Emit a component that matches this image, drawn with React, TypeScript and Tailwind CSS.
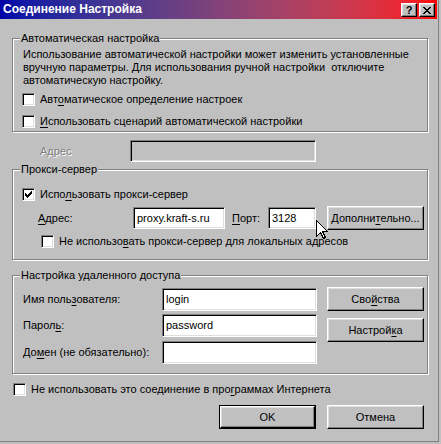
import React from 'react'

const sunken =
  'border border-t-[#808080] border-l-[#808080] border-r-white border-b-white shadow-[inset_1px_1px_0_#000,inset_-1px_-1px_0_#dfdfdf]'
const raised =
  'border border-t-white border-l-white border-r-black border-b-black shadow-[inset_-1px_-1px_0_#808080,inset_1px_1px_0_#dfdfdf]'

function CheckBox({ checked = false }: { checked?: boolean }) {
  return (
    <span className={`block w-[13px] h-[13px] shrink-0 bg-white ${sunken}`}>
      {checked && (
        <svg width="11" height="11" viewBox="0 0 11 11" shapeRendering="crispEdges" className="block">
          <rect x="2" y="4" width="1" height="3" fill="#000" />
          <rect x="3" y="5" width="1" height="3" fill="#000" />
          <rect x="4" y="6" width="1" height="3" fill="#000" />
          <rect x="5" y="5" width="1" height="3" fill="#000" />
          <rect x="6" y="4" width="1" height="3" fill="#000" />
          <rect x="7" y="3" width="1" height="3" fill="#000" />
          <rect x="8" y="2" width="1" height="3" fill="#000" />
        </svg>
      )}
    </span>
  )
}

function CheckRow({ checked, className = '', children }: { checked?: boolean; className?: string; children: React.ReactNode }) {
  return (
    <div className={`flex items-center gap-[5px] h-[13px] ${className}`}>
      <CheckBox checked={checked} />
      <span className="whitespace-nowrap">{children}</span>
    </div>
  )
}

function Group({ title, className = '', children }: { title: string; className?: string; children: React.ReactNode }) {
  return (
    <div className={`relative w-[416px] border border-[#808080] shadow-[inset_1px_1px_0_#fff,1px_1px_0_#fff] ${className}`}>
      <span className="absolute left-[7px] -top-[7px] px-[1px] bg-[#c0c0c0] leading-[13px] whitespace-nowrap">{title}</span>
      {children}
    </div>
  )
}

function Field({ value = '', width, height = 'h-[22px]', disabled = false }: { value?: string; width: string; height?: string; disabled?: boolean }) {
  return (
    <div className={`${width} ${height} shrink-0 flex items-center pl-[3px] ${disabled ? 'bg-[#c0c0c0]' : 'bg-white'} ${sunken}`}>
      <span className="whitespace-nowrap">{value}</span>
    </div>
  )
}

function Button({ children, className = '' }: { children: React.ReactNode; className?: string }) {
  return (
    <div className={`w-[97px] h-[24px] shrink-0 flex items-center justify-center bg-[#c0c0c0] ${raised} ${className}`}>
      <span className="whitespace-nowrap">{children}</span>
    </div>
  )
}

function Key({ children }: { children: React.ReactNode }) {
  return <u className="underline underline-offset-[2px]">{children}</u>
}

export default function App() {
  return (
    <div className="relative w-[441px] h-[444px] bg-[#c0c0c0] overflow-hidden text-[11px] leading-[13px] text-black font-['Liberation_Sans',Arial,sans-serif]">
      <div className="w-[439px] h-[442px] border-r border-b border-[#808080]">
        {/* title bar */}
        <div className="flex items-start w-[437px] h-[19px] bg-linear-to-r from-[#0000a8] to-[#ff0000]">
          <span className="ml-[3px] mt-[2px] text-[12px] leading-[15px] font-bold text-white whitespace-nowrap">Соединение Настройка</span>
          <div className="ml-auto mr-[2px] mt-[3px] flex gap-[2px]">
            <div className={`w-[16px] h-[14px] flex items-center justify-center bg-[#c0c0c0] ${raised}`}>
              <span className="text-[11px] leading-[11px] font-bold">?</span>
            </div>
            <div className={`w-[16px] h-[14px] flex items-center justify-center bg-[#c0c0c0] ${raised}`}>
              <svg width="8" height="7" viewBox="0 0 8 7" shapeRendering="crispEdges">
                <path d="M0 0h2v1h-2zM6 0h2v1h-2zM1 1h2v1h-2zM5 1h2v1h-2zM2 2h4v1h-4zM3 3h2v1h-2zM2 4h4v1h-4zM1 5h2v1h-2zM5 5h2v1h-2zM0 6h2v1h-2zM6 6h2v1h-2z" fill="#000" />
              </svg>
            </div>
          </div>
        </div>

        <div className="pl-[12px]">
          <Group title="Автоматическая настройка" className="mt-[19px] h-[94px]">
            <p className="pl-[10px] pt-[9px] whitespace-nowrap">
              Использование автоматической настройки может изменить установленные
              <br />
              вручную параметры. Для использования ручной настройки{'\u00a0'} отключите
              <br />
              автоматическую настройку.
            </p>
            <CheckRow className="mt-[6px] pl-[9px]">
              Авт<Key>о</Key>матическое определение настроек
            </CheckRow>
            <CheckRow className="mt-[9px] pl-[9px]">
              <Key>И</Key>спользовать сценарий автоматической настройки
            </CheckRow>
          </Group>

          <div className="mt-[8px] flex items-center h-[22px]">
            <span className="ml-[28px] w-[90px] text-[#808080] [text-shadow:1px_1px_0_#fff]">Адрес</span>
            <Field width="w-[186px]" disabled />
          </div>

          <Group title="Прокси-сервер" className="mt-[7px] h-[91px]">
            <CheckRow checked className="mt-[18px] pl-[9px]">
              Испо<Key>л</Key>ьзовать прокси-сервер
            </CheckRow>
            <div className="mt-[5px] flex items-center h-[24px] pl-[25px]">
              <span className="w-[95px] shrink-0"><Key>А</Key>дрес:</span>
              <Field width="w-[92px]" value="proxy.kraft-s.ru" />
              <span className="ml-[7px] w-[36px] shrink-0"><Key>П</Key>орт:</span>
              <Field width="w-[48px]" value="3128" />
              <Button className="ml-[11px]">
                Дополни<Key>т</Key>ельно...
              </Button>
            </div>
            <CheckRow className="mt-[5px] pl-[28px]">
              Не использо<Key>в</Key>ать прокси-сервер для локальных адресов
            </CheckRow>
          </Group>

          <Group title="Настройка удаленного доступа" className="mt-[15px] h-[99px]">
            <div className="flex">
              <div className="pl-[10px] pt-[12px] flex flex-col">
                <div className="flex items-center h-[23px]">
                  <span className="w-[139px] shrink-0">Имя поль<Key>з</Key>ователя:</span>
                  <Field width="w-[155px]" height="h-[23px]" value="login" />
                </div>
                <div className="mt-[3px] flex items-center h-[23px]">
                  <span className="w-[139px] shrink-0">Парол<Key>ь</Key>:</span>
                  <Field width="w-[155px]" height="h-[23px]" value="password" />
                </div>
                <div className="mt-[4px] flex items-center h-[23px]">
                  <span className="w-[139px] shrink-0">До<Key>м</Key>ен (не обязательно):</span>
                  <Field width="w-[155px]" height="h-[23px]" />
                </div>
              </div>
              <div className="ml-[10px] pt-[11px] flex flex-col gap-[7px]">
                <Button>
                  Сво<Key>й</Key>ства
                </Button>
                <Button>
                  Настрой<Key>к</Key>а
                </Button>
              </div>
            </div>
          </Group>

          <CheckRow className="mt-[9px] pl-[1px]">
            Не использовать это соединение в про<Key>г</Key>раммах Интернета
          </CheckRow>

          <div className="mt-[9px] flex pl-[207px] gap-[11px]">
            <div className="w-[97px] h-[24px] border border-black">
              <div className={`w-full h-full flex items-center justify-center bg-[#c0c0c0] ${raised}`}>OK</div>
            </div>
            <Button>Отмена</Button>
          </div>
        </div>
      </div>

      {/* mouse pointer */}
      <svg className="absolute left-[316px] top-[220px]" width="12" height="19" viewBox="0 0 12 19" shapeRendering="crispEdges">
        <path d="M0.5 0.5V16.5L4.5 12.5L7.5 18.5L9.5 17.5L6.5 11.5H11.5Z" fill="#fff" stroke="#000" strokeWidth="1" />
      </svg>
    </div>
  )
}
